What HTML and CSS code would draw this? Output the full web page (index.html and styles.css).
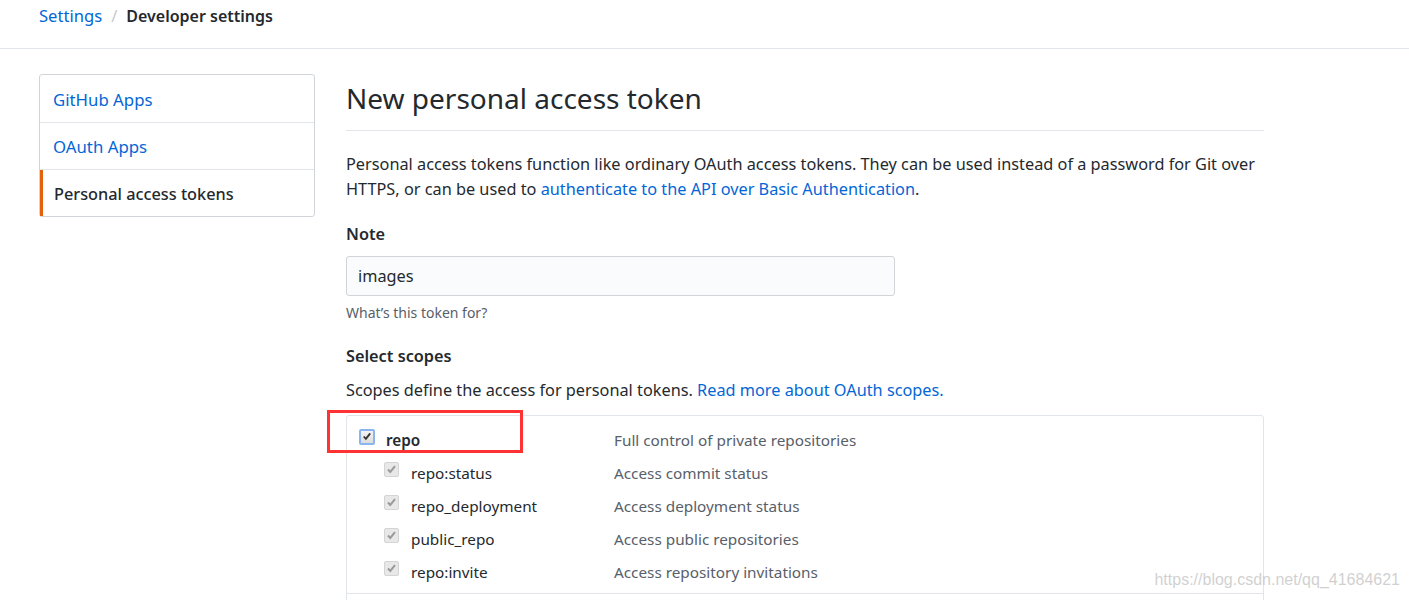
FILE: index.html
```html
<!DOCTYPE html>
<html lang="en">
<head>
<meta charset="utf-8">
<title>New personal access token</title>
<link rel="stylesheet" href="styles.css">
</head>
<body>
<header class="topbar">
  <nav class="breadcrumb">
    <a class="crumb-link" href="#">Settings</a>
    <span class="crumb-sep">/</span>
    <span class="crumb-current">Developer settings</span>
  </nav>
</header>
<div class="layout">
  <aside class="sidebar">
    <a class="side-item" href="#">GitHub Apps</a>
    <a class="side-item" href="#">OAuth Apps</a>
    <a class="side-item active" href="#">Personal access tokens</a>
  </aside>
  <main class="content">
    <h1 class="subhead">New personal access token</h1>
    <p class="intro">Personal access tokens function like ordinary OAuth access tokens. They can be used instead of a password for Git over<br>HTTPS, or can be used to <a href="#">authenticate to the API over Basic Authentication</a>.</p>
    <div class="field">
      <label class="field-label">Note</label>
      <div class="input">images</div>
      <p class="hint">What’s this token for?</p>
    </div>
    <h3 class="field-label scopes-title">Select scopes</h3>
    <p class="scopes-desc">Scopes define the access for personal tokens. <a href="#">Read more about OAuth scopes.</a></p>
    <div class="scopes">
      <div class="scope-group">
        <div class="scope-row parent">
          <span class="check focused"><svg viewBox="0 0 13 13" width="13" height="13"><path d="M3 6.5 L5.3 9 L10 3.2" fill="none" stroke="#333" stroke-width="2"/></svg></span>
          <span class="scope-name bold">repo</span>
          <span class="scope-desc">Full control of private repositories</span>
        </div>
        <div class="scope-row child">
          <span class="check disabled"><svg viewBox="0 0 13 13" width="13" height="13"><path d="M3 6.5 L5.3 9 L10 3.2" fill="none" stroke="#9a9a9a" stroke-width="2"/></svg></span>
          <span class="scope-name">repo:status</span>
          <span class="scope-desc">Access commit status</span>
        </div>
        <div class="scope-row child">
          <span class="check disabled"><svg viewBox="0 0 13 13" width="13" height="13"><path d="M3 6.5 L5.3 9 L10 3.2" fill="none" stroke="#9a9a9a" stroke-width="2"/></svg></span>
          <span class="scope-name">repo_deployment</span>
          <span class="scope-desc">Access deployment status</span>
        </div>
        <div class="scope-row child">
          <span class="check disabled"><svg viewBox="0 0 13 13" width="13" height="13"><path d="M3 6.5 L5.3 9 L10 3.2" fill="none" stroke="#9a9a9a" stroke-width="2"/></svg></span>
          <span class="scope-name">public_repo</span>
          <span class="scope-desc">Access public repositories</span>
        </div>
        <div class="scope-row child">
          <span class="check disabled"><svg viewBox="0 0 13 13" width="13" height="13"><path d="M3 6.5 L5.3 9 L10 3.2" fill="none" stroke="#9a9a9a" stroke-width="2"/></svg></span>
          <span class="scope-name">repo:invite</span>
          <span class="scope-desc">Access repository invitations</span>
        </div>
      </div>
      <div class="scope-group"></div>
      <div class="annotation"></div>
    </div>
  </main>
</div>
<div class="watermark">https://blog.csdn.net/qq_41684621</div>
</body>
</html>
```
FILE: styles.css
```css
* { box-sizing: border-box; }
html, body { margin: 0; padding: 0; }
body {
  font-family: "Noto Sans", "Open Sans", Arial, sans-serif;
  font-size: 16.3px;
  color: #24292e;
  background: #fff;
  overflow: hidden;
  height: 600px;
  position: relative;
}
a { color: #0366d6; text-decoration: none; }
.topbar {
  height: 49px;
  border-bottom: 1px solid #e1e4e8;
  padding: 4px 39px 0;
}
.breadcrumb { font-size: 16.6px; line-height: 24px; display: flex; align-items: center; }
.crumb-sep { color: #c6cbd1; margin: 0 9px 0 9px; }
.crumb-current { font-weight: 600; font-size: 16px; }
.layout {
  display: flex;
  gap: 31px;
  padding: 25px 0 0 39px;
}
.sidebar {
  width: 276px;
  flex: none;
  border: 1px solid #d1d5da;
  border-radius: 3px;
  display: flex;
  flex-direction: column;
  align-self: flex-start;
}
.side-item {
  display: block;
  height: 47px;
  line-height: 24px;
  padding: 12px 13px 0;
  border-bottom: 1px solid #e1e4e8;
  font-size: 16.8px;
}
.side-item:first-child { height: 48px; padding-top: 13px; }
.side-item:last-child { border-bottom: 0; height: 46px; }
.side-item.active {
  color: #24292e;
  font-weight: 500;
  border-left: 3px solid #e36209;
  padding-left: 11px;
  font-size: 16.3px;
}
.content { width: 918px; }
.subhead {
  margin: 0;
  font-size: 28px;
  font-weight: 400;
  line-height: 48px;
  padding-bottom: 8px;
  border-bottom: 1px solid #e1e4e8;
}
.intro { margin: 21px 0 20px; line-height: 25px; }
.field-label { display: block; font-weight: 600; font-size: 16.3px; line-height: 24px; margin: 0 0 10px; }
.input {
  width: 549px;
  height: 40px;
  background: #fafbfc;
  border: 1px solid #d1d5da;
  border-radius: 3px;
  padding: 7px 11px;
  line-height: 24px;
}
.hint { margin: 7px 0 0; font-size: 14px; color: #586069; line-height: 20px; }
.scopes-title { margin-top: 21px; }
.scopes-desc { margin: 10px 0 13px; line-height: 24px; }
.scopes {
  position: relative;
  border: 1px solid #e1e4e8;
  border-radius: 3px;
  font-size: 15.3px;
}
.scope-group { padding: 7px 12px 5px; border-bottom: 1px solid #e1e4e8; }
.scope-group:last-of-type { border-bottom: 0; height: 40px; }
.scope-row {
  display: flex;
  align-items: center;
  height: 33px;
}
.scope-row.child { padding-left: 25px; }
.check {
  flex: none;
  width: 15px;
  height: 15px;
  border: 1px solid #ababab;
  border-radius: 2px;
  background: linear-gradient(#f4f4f4, #dcdcdc);
  display: flex;
  align-items: center;
  justify-content: center;
  margin-right: 12px;
  margin-top: -6px;
}
.check.focused { width: 16px; height: 16px; border: 2px solid #8ab4f0; margin-right: 11px; }
.check.disabled { border-color: #d4d4d4; background: #e8e8e8; }
.scope-name { width: 228px; flex: none; }
.child .scope-name { width: 203px; }
.bold { font-weight: 600; }
.scope-desc { color: #586069; }
.annotation {
  position: absolute;
  left: -20px;
  top: -6px;
  width: 196px;
  height: 43px;
  border: 3px solid #f33;
}
.watermark {
  position: absolute;
  right: 9px;
  top: 571px;
  font-family: "Liberation Sans", Arial, sans-serif;
  font-size: 16px;
  color: rgba(200, 200, 200, 0.85);
}
```
